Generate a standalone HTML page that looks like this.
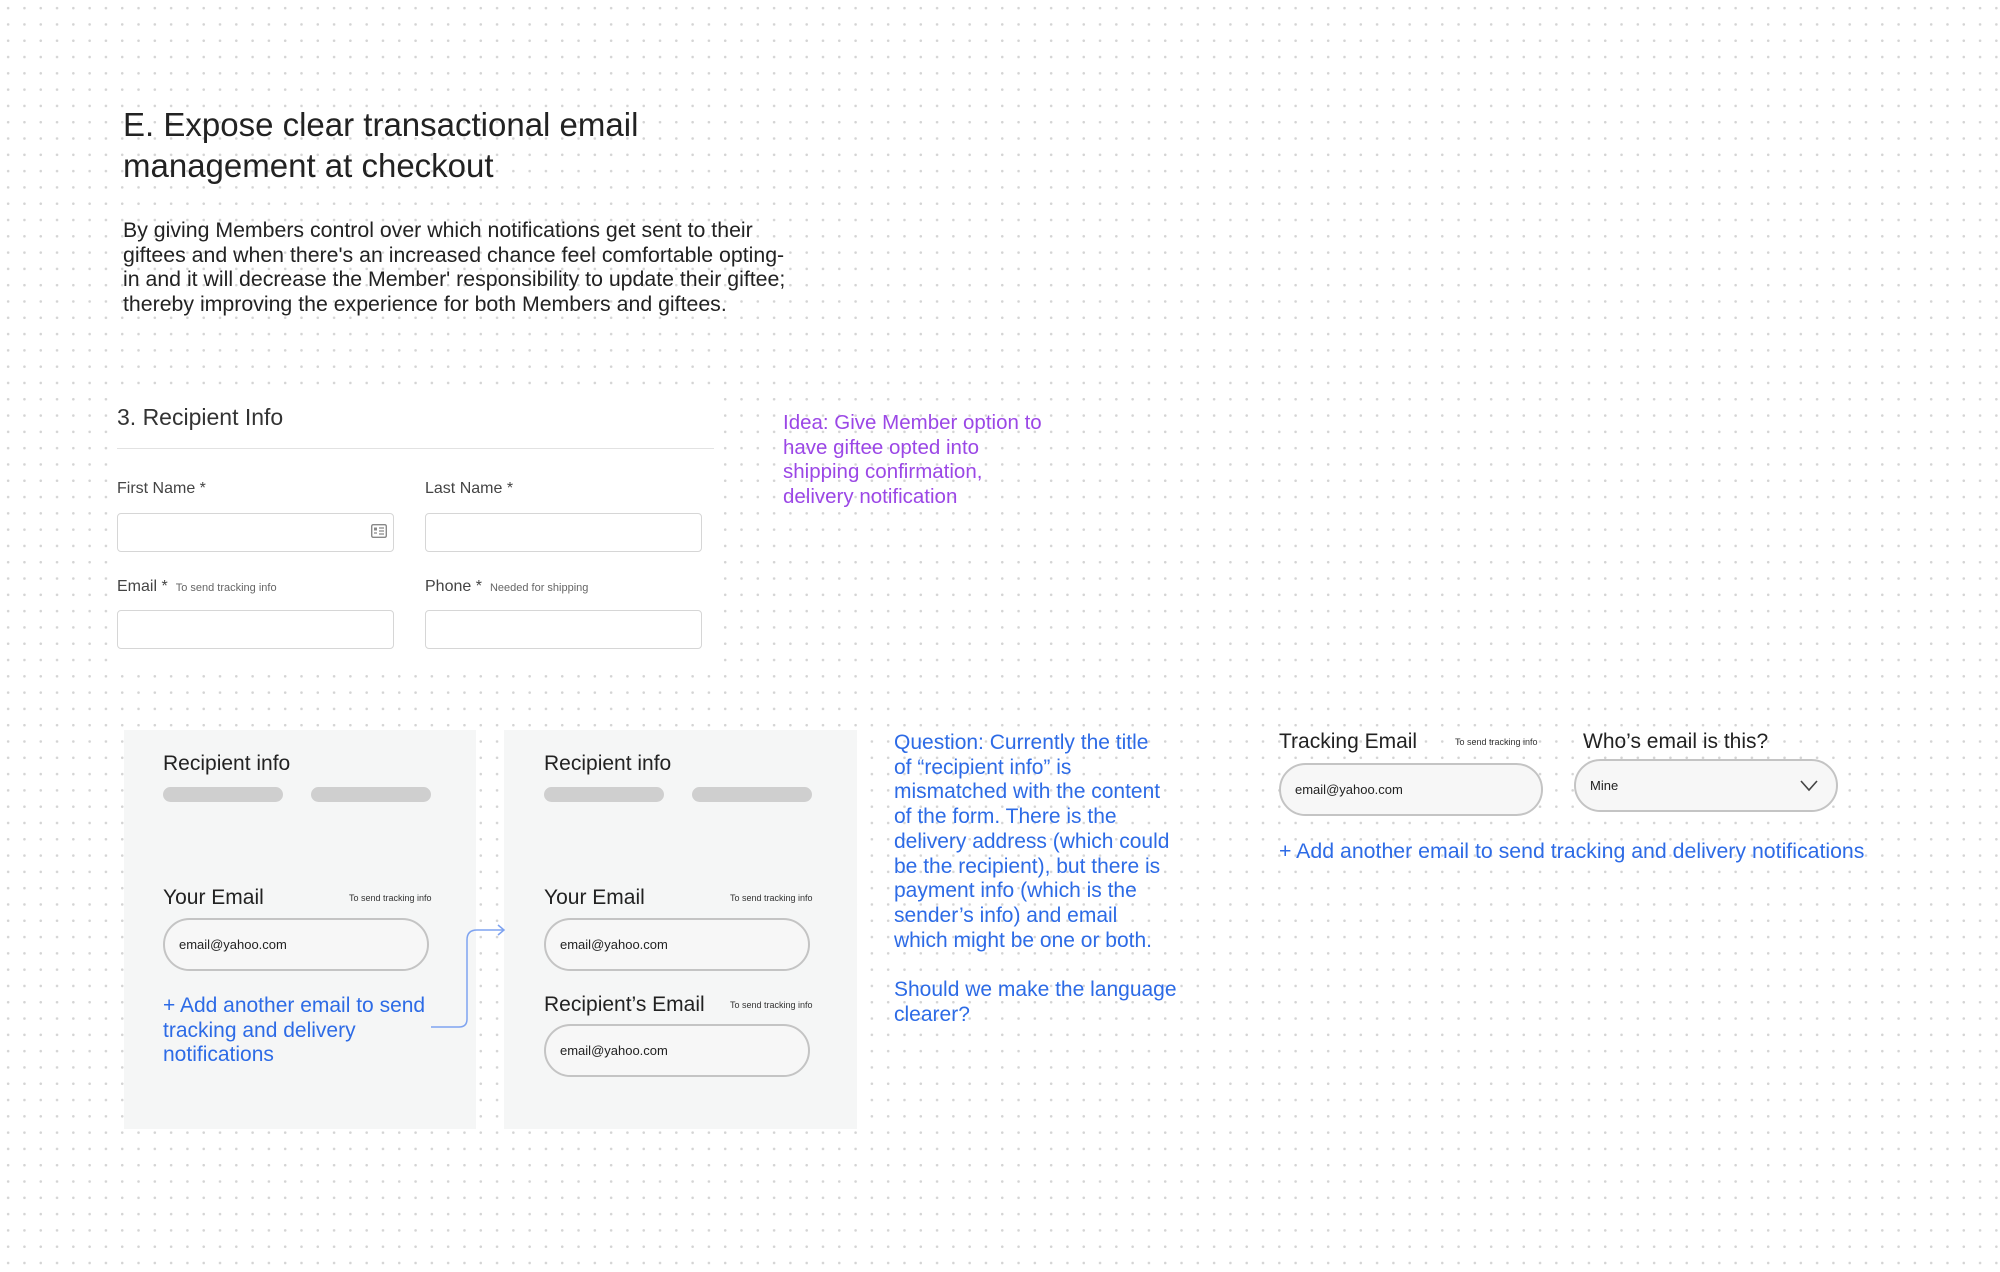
<!DOCTYPE html>
<html><head><meta charset="utf-8"><style>
*{margin:0;padding:0;box-sizing:border-box}
body{width:2000px;height:1272px;position:relative;overflow:hidden;font-family:"Liberation Sans",sans-serif;color:#222;
background:#fff radial-gradient(circle,#d4d4d4 1.1px,transparent 1.5px) 0 0/16.3px 16.3px;}
.a{position:absolute;white-space:nowrap}
.in{position:absolute;border:1.5px solid #d6d6d6;border-radius:4px;background:#fff}
.lbl{font-size:16px;color:#444;}
.lbl small{font-size:11px;color:#666;margin-left:8px}
.panel{position:absolute;background:#f5f6f6;}
.h{font-size:21px;color:#222}
.bar{position:absolute;height:15px;width:120px;border-radius:8px;background:#cfcfcf}
.pill{position:absolute;border:2.5px solid #c4c4c4;border-radius:27px;background:#f7f7f7;font-size:13px;color:#222;padding-left:14px;display:flex;align-items:center}
.tiny{font-size:9px;color:#333}
.blue{color:#2d6be6;font-size:21px;line-height:24.7px}
</style></head><body>
<div class="a" style="left:123px;top:104px;font-size:33px;line-height:41px;color:#222">E. Expose clear transactional email<br>management at checkout</div>
<div class="a" style="left:123px;top:218px;font-size:21.3px;line-height:24.7px;color:#222">By giving Members control over which notifications get sent to their<br>giftees and when there's an increased chance feel comfortable opting-<br>in and it will decrease the Member' responsibility to update their giftee;<br>thereby improving the experience for both Members and giftees.</div>

<div style="position:absolute;left:112px;top:385px;width:610px;height:285px;background:#fff"></div>
<div class="a" style="left:117px;top:403px;font-size:23px;line-height:28px;color:#333">3. Recipient Info</div>
<div style="position:absolute;left:117px;top:448px;width:597px;height:1px;background:#e2e2e2"></div>
<div class="a lbl" style="left:117px;top:480px">First Name *</div>
<div class="a lbl" style="left:425px;top:480px">Last Name *</div>
<div class="in" style="left:117px;top:513px;width:277px;height:39px"></div>
<svg class="a" style="left:371px;top:524px" width="16" height="14" viewBox="0 0 16 14"><rect x="0.7" y="0.7" width="14.6" height="12.6" rx="1.5" fill="none" stroke="#888" stroke-width="1.4"/><rect x="3" y="3.5" width="3" height="3" fill="#888"/><path d="M3 9h3M8 4h5M8 7h5M8 10h5" stroke="#888" stroke-width="1.2"/></svg>
<div class="in" style="left:425px;top:513px;width:277px;height:39px"></div>
<div class="a lbl" style="left:117px;top:578px">Email *<small>To send tracking info</small></div>
<div class="a lbl" style="left:425px;top:578px">Phone *<small>Needed for shipping</small></div>
<div class="in" style="left:117px;top:610px;width:277px;height:39px"></div>
<div class="in" style="left:425px;top:610px;width:277px;height:39px"></div>

<div class="a" style="left:783px;top:411px;font-size:20.5px;line-height:24.7px;color:#9b47e6">Idea: Give Member option to<br>have giftee opted into<br>shipping confirmation,<br>delivery notification</div>

<div class="panel" style="left:124px;top:730px;width:352px;height:399px"></div>
<div class="panel" style="left:504px;top:730px;width:353px;height:399px"></div>
<div class="a h" style="left:163px;top:752px">Recipient info</div>
<div class="bar" style="left:163px;top:787px"></div><div class="bar" style="left:311px;top:787px"></div>
<div class="a h" style="left:163px;top:886px">Your Email</div>
<div class="a tiny" style="left:349px;top:893px">To send tracking info</div>
<div class="pill" style="left:163px;top:918px;width:266px;height:53px">email@yahoo.com</div>
<div class="a blue" style="left:163px;top:994px">+ Add another email to send<br>tracking and delivery<br>notifications</div>

<div class="a h" style="left:544px;top:752px">Recipient info</div>
<div class="bar" style="left:544px;top:787px"></div><div class="bar" style="left:692px;top:787px"></div>
<div class="a h" style="left:544px;top:886px">Your Email</div>
<div class="a tiny" style="left:730px;top:893px">To send tracking info</div>
<div class="pill" style="left:544px;top:918px;width:266px;height:53px">email@yahoo.com</div>
<div class="a h" style="left:544px;top:993px">Recipient’s Email</div>
<div class="a tiny" style="left:730px;top:1000px">To send tracking info</div>
<div class="pill" style="left:544px;top:1024px;width:266px;height:53px">email@yahoo.com</div>

<svg class="a" style="left:425px;top:920px" width="85" height="112" viewBox="0 0 85 112"><path d="M6 107H34Q42 107 42 99V20Q42 10 52 10H79M73 5L79 10L73 15" fill="none" stroke="#7ea3f0" stroke-width="1.5"/></svg>

<div class="a blue" style="left:894px;top:731px">Question: Currently the title<br>of “recipient info” is<br>mismatched with the content<br>of the form. There is the<br>delivery address (which could<br>be the recipient), but there is<br>payment info (which is the<br>sender’s info) and email<br>which might be one or both.<br><br>Should we make the language<br>clearer?</div>

<div class="a h" style="left:1279px;top:730px">Tracking Email</div>
<div class="a tiny" style="left:1455px;top:737px">To send tracking info</div>
<div class="pill" style="left:1279px;top:763px;width:264px;height:53px">email@yahoo.com</div>
<div class="a h" style="left:1583px;top:730px">Who’s email is this?</div>
<div class="pill" style="left:1574px;top:759px;width:264px;height:53px">Mine</div>
<svg class="a" style="left:1800px;top:780px" width="18" height="12" viewBox="0 0 18 12"><path d="M1 1L9 10L17 1" fill="none" stroke="#444" stroke-width="1.6"/></svg>
<div class="a blue" style="left:1279px;top:839px;font-size:21.3px">+ Add another email to send tracking and delivery notifications</div>
</body></html>
